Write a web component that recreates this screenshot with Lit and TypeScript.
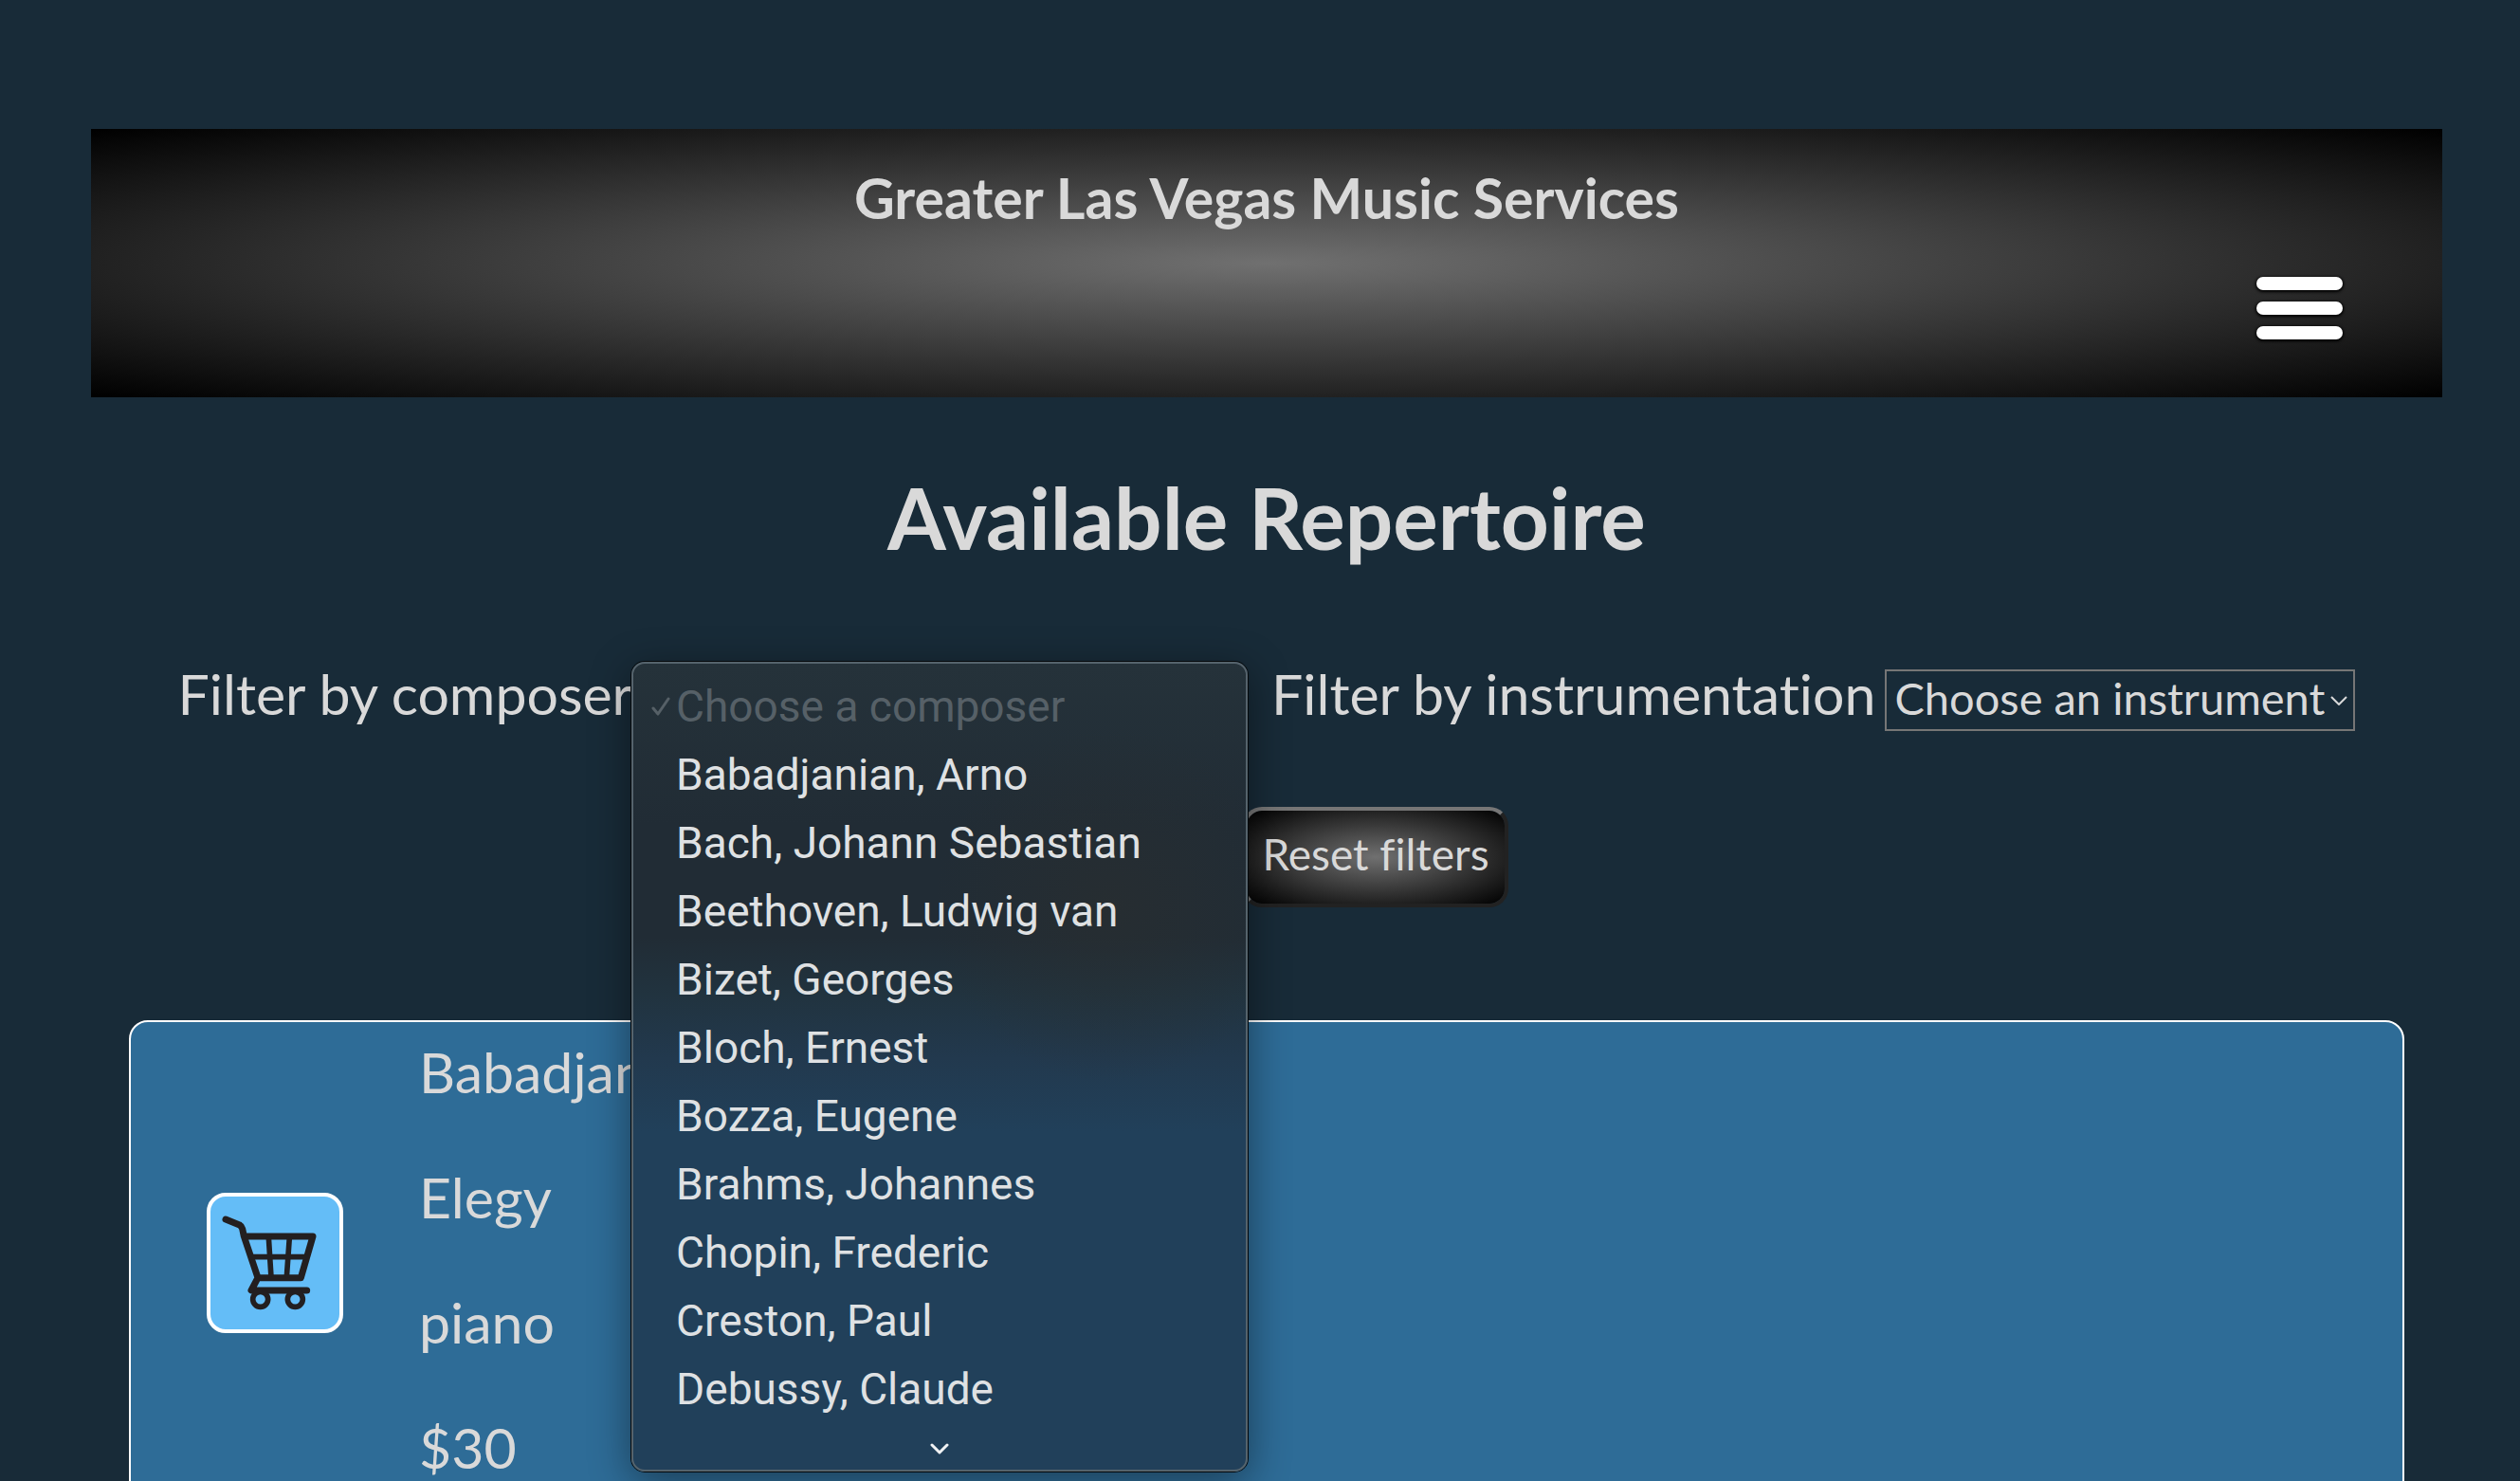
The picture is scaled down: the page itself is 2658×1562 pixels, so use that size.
import { LitElement, html, css } from "lit";
import { customElement, property, state } from "lit/decorators.js";

interface Piece {
  composer: string;
  title: string;
  instrumentation: string;
  price: string;
}

const COMPOSERS = [
  "Babadjanian, Arno",
  "Bach, Johann Sebastian",
  "Beethoven, Ludwig van",
  "Bizet, Georges",
  "Bloch, Ernest",
  "Bozza, Eugene",
  "Brahms, Johannes",
  "Chopin, Frederic",
  "Creston, Paul",
  "Debussy, Claude",
];

const PIECES: Piece[] = [
  { composer: "Babadjanian, Arno", title: "Elegy", instrumentation: "piano", price: "$30" },
];

@customElement("site-header")
class SiteHeader extends LitElement {
  static styles = css`
    :host {
      display: block;
    }
    .bar {
      display: flex;
      flex-direction: column;
      gap: 47px;
      padding: 37px 105px 61px;
      background: radial-gradient(#707070, #000);
    }
    .name {
      margin: 0;
      text-align: center;
      font-size: 59px;
      line-height: 72px;
      font-weight: 700;
    }
    .menu-button {
      align-self: flex-end;
      display: grid;
      gap: 12px;
      padding: 0;
      border: 0;
      background: none;
    }
    .line {
      width: 91px;
      height: 14px;
      border-radius: 7px;
      background: #fff;
      box-shadow: 0 1px 3px 1px #000;
    }
  `;

  render() {
    return html`
      <header class="bar">
        <p class="name">Greater Las Vegas Music Services</p>
        <button class="menu-button" aria-label="Menu">
          <span class="line"></span><span class="line"></span><span class="line"></span>
        </button>
      </header>
    `;
  }
}

@customElement("composer-menu")
class ComposerMenu extends LitElement {
  static styles = css`
    :host {
      display: block;
      font-family: Roboto, sans-serif;
      font-size: 46px;
      line-height: 72px;
      color: #dfe1e3;
    }
    .panel {
      box-sizing: border-box;
      padding-top: 9px;
      border: 2px solid #55636c;
      border-radius: 14px;
      background:
        radial-gradient(circle at 78% 30%, #2a2e2f99 0, #2a2e2f00 24%),
        linear-gradient(#25323a 0%, #212c35 20%, #212c35 34%, #21333f 41%, #22394e 49%, #21405a 58%, #21405a 100%);
      box-shadow: 0 0 0 1px #05090c, 0 10px 44px rgba(0, 0, 0, 0.45);
    }
    .list {
      margin: 0;
      padding: 0;
      list-style: none;
    }
    .item {
      display: grid;
      grid-template-columns: 20px 1fr;
      gap: 6px;
      align-items: center;
      width: 100%;
      padding: 0 20px 0 19px;
      border: 0;
      background: none;
      color: inherit;
      font: inherit;
      text-align: left;
    }
    .item:disabled {
      color: #566067;
    }
    .label {
      grid-column: 2;
    }
    .more {
      display: grid;
      place-items: center;
      width: 100%;
      height: 49px;
      padding: 4px 0 0;
      border: 0;
      background: none;
      color: #f0f2f4;
    }
    svg {
      display: block;
      fill: none;
      stroke: currentColor;
      stroke-linecap: round;
      stroke-linejoin: round;
    }
  `;

  render() {
    return html`
      <div class="panel">
        <ul class="list">
          <li>
            <button class="item" disabled>
              <svg width="20" height="20" viewBox="0 0 20 20" stroke-width="3">
                <path d="M2 12 7 18 18 2" />
              </svg>
              <span class="label">Choose a composer</span>
            </button>
          </li>
          ${COMPOSERS.map(
            (name) => html`
              <li>
                <button class="item"><span class="label">${name}</span></button>
              </li>
            `,
          )}
        </ul>
        <button class="more" aria-label="More composers">
          <svg width="20" height="12" viewBox="0 0 20 12" stroke-width="3">
            <path d="M2 2 10 10 18 2" />
          </svg>
        </button>
      </div>
    `;
  }
}

@customElement("piece-card")
class PieceCard extends LitElement {
  static styles = css`
    :host {
      display: block;
    }
    .card {
      display: flex;
      align-items: center;
      gap: 80px;
      padding-left: 80px;
      border: 2px solid #fff;
      border-radius: 20px;
      background: #2e6c97;
    }
    .add {
      flex: none;
      box-sizing: border-box;
      width: 144px;
      height: 148px;
      padding: 0;
      border: 4px solid #fff;
      border-radius: 20px;
      background: #64bdf7;
    }
    .cart {
      display: block;
      width: 100%;
      height: 100%;
      fill: none;
      stroke: #231f20;
      stroke-linecap: round;
      stroke-linejoin: round;
    }
    .details {
      display: grid;
      gap: 60px;
      padding: 17px 0 23px;
      font-size: 59px;
      line-height: 72px;
    }
    .line {
      margin: 0;
    }
  `;

  @property({ attribute: false }) piece!: Piece;

  render() {
    const { composer, title, instrumentation, price } = this.piece;
    return html`
      <article class="card">
        <button class="add" aria-label="Add ${title} to cart">
          <svg class="cart" viewBox="51 51 408 420">
            <path stroke-width="21" d="M99 123 143 141Q149 144 152 153L157 177H375L337 308H201L157 177M201 308 180 348H356" />
            <path stroke-width="17" stroke-linecap="butt" d="M180 242H354M235 180 243 306M301 180 292 306" />
            <circle cx="209" cy="376" r="24" stroke-width="17" />
            <circle cx="319" cy="376" r="24" stroke-width="17" />
          </svg>
        </button>
        <div class="details">
          <p class="line">${composer}</p>
          <p class="line">${title}</p>
          <p class="line">${instrumentation}</p>
          <p class="line">${price}</p>
        </div>
      </article>
    `;
  }
}

@customElement("app-root")
class AppRoot extends LitElement {
  static styles = css`
    :host {
      display: block;
      box-sizing: border-box;
      min-height: 100vh;
      padding: 136px 82px 40px 96px;
      background: #182b38;
      color: #d9d9d9;
      font-family: Lato, sans-serif;
      font-variant-ligatures: none;
    }
    .heading {
      margin: 73px 0 96px;
      text-align: center;
      font-size: 89px;
      line-height: 108px;
      font-weight: 700;
    }
    .filters {
      display: flex;
      justify-content: center;
      align-items: baseline;
      gap: 64px;
    }
    .filter {
      display: flex;
      align-items: baseline;
      gap: 10px;
    }
    .caption {
      font-size: 59px;
      line-height: 72px;
      white-space: nowrap;
    }
    .field {
      display: grid;
      position: relative;
    }
    .select {
      grid-area: 1 / 1;
      appearance: none;
      padding: 0 30px 5px 8px;
      border: 2px solid #767676;
      border-radius: 0;
      background: none;
      color: inherit;
      font-family: inherit;
      font-size: 47px;
      line-height: 56px;
      font-variant-ligatures: none;
    }
    .wide {
      width: 600px;
    }
    .chevron {
      grid-area: 1 / 1;
      place-self: center end;
      margin-right: 8px;
      fill: none;
      stroke: currentColor;
      stroke-width: 2;
      pointer-events: none;
    }
    .menu {
      position: absolute;
      z-index: 1;
      top: -8px;
      left: -11px;
      width: 650px;
    }
    .actions {
      display: flex;
      justify-content: center;
      margin: 80px 0 119px;
      padding-left: 230px;
    }
    .reset {
      padding: 18px 16px 24px;
      border: 4px solid;
      border-color: #767676 #222 #222 #767676;
      border-radius: 20px;
      background: radial-gradient(#707070, #000) padding-box;
      color: inherit;
      font-family: inherit;
      font-size: 46px;
      line-height: 56px;
      font-variant-ligatures: none;
    }
    .results {
      display: grid;
      gap: 40px;
      padding: 0 40px;
    }
  `;

  @state() private pieces = PIECES;

  private chevron() {
    return html`
      <svg class="chevron" width="18" height="10" viewBox="0 0 18 10">
        <path d="M1 1 9 9 17 1" />
      </svg>
    `;
  }

  render() {
    return html`
      <site-header></site-header>
      <main>
        <h1 class="heading">Available Repertoire</h1>
        <div class="filters">
          <div class="filter">
            <label class="caption" for="composer">Filter by composer</label>
            <div class="field">
              <select class="select wide" id="composer">
                <option>Choose a composer</option>
                ${COMPOSERS.map((name) => html`<option>${name}</option>`)}
              </select>
              ${this.chevron()}
              <composer-menu class="menu"></composer-menu>
            </div>
          </div>
          <div class="filter">
            <label class="caption" for="instrument">Filter by instrumentation</label>
            <div class="field">
              <select class="select" id="instrument">
                <option>Choose an instrument</option>
                <option>piano</option>
              </select>
              ${this.chevron()}
            </div>
          </div>
        </div>
        <div class="actions">
          <button class="reset">Reset filters</button>
        </div>
        <section class="results">
          ${this.pieces.map((piece) => html`<piece-card .piece=${piece}></piece-card>`)}
        </section>
      </main>
    `;
  }
}
